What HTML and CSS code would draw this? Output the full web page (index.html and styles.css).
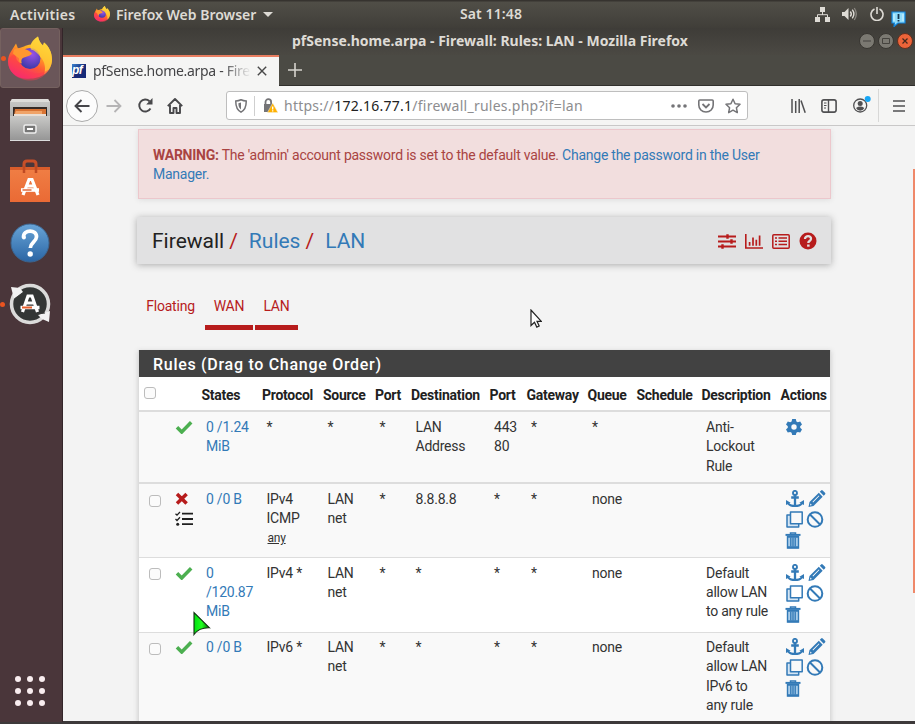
FILE: index.html
```html
<!DOCTYPE html>
<html lang="en">
<head>
<meta charset="utf-8">
<title>pfSense.home.arpa - Firewall: Rules: LAN</title>
<link rel="stylesheet" href="styles.css">
</head>
<body>
<svg class="defs" aria-hidden="true">
  <defs>
    <linearGradient id="flame" x1="0.8" y1="0" x2="0.3" y2="1"><stop offset="0" stop-color="#fff04a"/><stop offset=".35" stop-color="#ffae20"/><stop offset=".65" stop-color="#ff5a35"/><stop offset="1" stop-color="#f0208a"/></linearGradient>
    <radialGradient id="globe" cx=".6" cy=".3" r=".7"><stop offset="0" stop-color="#9a52e8"/><stop offset="1" stop-color="#3c3aa8"/></radialGradient>
    <linearGradient id="blue" x1="0" y1="0" x2="0" y2="1"><stop offset="0" stop-color="#69a5d8"/><stop offset="1" stop-color="#2a65a4"/></linearGradient>
    <linearGradient id="metal" x1="0" y1="0" x2="0" y2="1"><stop offset="0" stop-color="#c9c9c7"/><stop offset="1" stop-color="#949494"/></linearGradient>
    <linearGradient id="bag" x1="0" y1="0" x2="0" y2="1"><stop offset="0" stop-color="#f07f45"/><stop offset="1" stop-color="#ea6a35"/></linearGradient>
    <linearGradient id="green" x1="0" y1="0" x2="1" y2="0"><stop offset="0" stop-color="#00e010"/><stop offset=".5" stop-color="#20ff20"/><stop offset="1" stop-color="#006800"/></linearGradient>
  </defs>
  <symbol id="firefox" viewBox="0 0 44 44">
    <path d="M3 15 8 7l2 5 6-2c2-1 4-2 7-2 1-3 4-6 7-8 1 4 2 6 5 9l1-3c5 4 8 10 8 17 0 10-9 19-21 19C10 44 0 36 0 25c0-4 1-7 3-10Z" fill="url(#flame)"/>
    <circle cx="22" cy="22" r="10.500" fill="url(#globe)"/>
    <path d="M6 13c6-3 15 0 18 4-2 3-6 3-8 4-3 1-3 4-2 6-4-1-6-4-6-7l-3-3Z" fill="#ff9730"/>
    <path d="M30 0c1 4 2 6 5 9l1-3c5 4 8 10 8 17 0 6-3 12-8 15 2-6 1-12-3-17-3-4-6-7-10-8-2-5 2-10 7-13Z" fill="#ffd23a" opacity=".75"/>
    <path d="M0 25c0 11 10 19 23 19 8 0 15-5 18-11-6 4-13 5-20 2-6-2-10-7-10-13l-5-4c-3 1-5 4-6 7Z" fill="#ff3a4c" opacity=".45"/>
  </symbol>
  <symbol id="check" viewBox="0 0 18 14"><path d="M2 7.200 6.700 12 16.200 2.200" fill="none" stroke="#4caf50" stroke-width="3.500"/></symbol>
  <symbol id="times" viewBox="0 0 14 14"><path d="m2 2 9.600 9.600M11.600 2 2 11.600" fill="none" stroke="#b71c1c" stroke-width="3.500"/></symbol>
  <symbol id="tasks" viewBox="0 0 18 16"><path d="M7 2.700h11M7 8h11M7 13.200h11" stroke="#212121" stroke-width="1.800"/><path d="m.5 2.800 1.500 1.400L5 1M.5 8.100 2 9.500l3-3.200" fill="none" stroke="#212121" stroke-width="1.300"/><circle cx="2.700" cy="13.200" r="1.500" fill="#212121"/></symbol>
  <symbol id="gear" viewBox="0 0 16 16"><path fill-rule="evenodd" d="M6.200 0h3.600l.6 2.400 1.400.8 2.400-.7 1.800 3.100-1.800 1.700v1.500L16 10.500l-1.800 3.100-2.400-.7-1.400.8L9.800 16H6.200l-.6-2.300-1.400-.8-2.400.7L0 10.500l1.800-1.700V7.300L0 5.600l1.800-3.100 2.400.7 1.400-.8ZM8 5.300a2.700 2.700 0 1 0 0 5.400 2.700 2.700 0 0 0 0-5.400Z" fill="#337ab7"/></symbol>
  <symbol id="anchor" viewBox="0 0 18 17"><circle cx="9" cy="2.900" r="2" fill="none" stroke="#337ab7" stroke-width="1.900"/><path d="M9 4.500V15M5.200 7.500h7.600" stroke="#337ab7" stroke-width="2.300" fill="none"/><path d="M0 15V10l4.600 2.800-1.300.7c1.400 1 3 1.300 5.700 1.300s4.300-.3 5.700-1.300l-1.300-.7L18 10v5l-1.500-.8C14.900 16.200 12.500 17 9 17s-5.900-.8-7.500-2.800Z" fill="#337ab7"/></symbol>
  <symbol id="pencil" viewBox="0 0 17 17"><path fill-rule="evenodd" d="M0 17 1 12 10.300 2.800l3.900 3.900L5 16Zm1.900-3.400-.4 1.900 1.900-.4ZM4 11.800l.6.600 6.300-6.300-.6-.6ZM11.300 1.800l1.300-1.300q.8-.8 1.600 0l2.300 2.300q.8.800 0 1.600l-1.300 1.300Z" fill="#337ab7"/></symbol>
  <symbol id="clone" viewBox="0 0 17 17"><path d="M1 4.500h3.500v8.200h8V16H1Z" fill="#d5e6f4"/><path d="M4.500 1h11.700v11.700H4.500ZM4.500 4H1v12h11.700v-3.300" fill="none" stroke="#337ab7" stroke-width="1.500" stroke-linejoin="round"/></symbol>
  <symbol id="ban" viewBox="0 0 17 17"><path d="M3 3l11 11" stroke="#337ab7" stroke-width="2"/><circle cx="8.500" cy="8.500" r="7.300" fill="none" stroke="#337ab7" stroke-width="2"/></symbol>
  <symbol id="trash" viewBox="0 0 15 17"><path d="M2 4h11v12H2Z" fill="#a9cdea"/><path d="M5 2V.9h5V2" fill="none" stroke="#337ab7" stroke-width="1.500"/><path d="M0 1.900h15v2H0Z" fill="#337ab7"/><path d="M2 4v12h11V4M5.300 5.500v9M7.500 5.500v9M9.700 5.500v9" fill="none" stroke="#337ab7" stroke-width="1.400"/><path d="M2 15.300h11M2 4.700h11" stroke="#337ab7" stroke-width="2"/></symbol>
</svg>

<header class="topbar">
  <span class="activities">Activities</span>
  <svg class="ff-small"><use href="#firefox"/></svg>
  <span class="appname">Firefox Web Browser</span><i class="caret"></i>
  <span class="clock">Sat 11:48</span>
  <div class="tray">
    <svg class="net" viewBox="0 0 15 15"><path d="M5 0h5v5H5ZM0 10h5v5H0ZM10 10h5v5h-5Z" fill="#dedbd5"/><path d="M7.500 5v3M2.500 10V7.700h10V10" fill="none" stroke="#dedbd5"/></svg>
    <svg class="vol" viewBox="0 0 15 14"><path d="M0 5h2.500L6.500 1v12L2.500 9H0Z" fill="#dedbd5"/><path d="M8.300 4.500q2 2.500 0 5M10.300 2.700q3.200 4.300 0 8.600" fill="none" stroke="#dedbd5" stroke-width="1.400"/><path d="M12.300 1q4 6 0 12" fill="none" stroke="#8a8780" stroke-width="1.300"/></svg>
    <svg class="power" viewBox="0 0 14 14"><path d="M4.500 2A6 6 0 1 0 9.500 2M7 0v7" fill="none" stroke="#dedbd5" stroke-width="1.600"/></svg>
    <svg class="msg" viewBox="0 0 15 16"><path d="M1 1h13v11H7l-4 3.500.4-3.500H1Z" fill="#8fdcfb" stroke="#0e82dc" stroke-width="1.200"/><path d="M3 3v7M12 3v7" stroke="#d8f6ff"/><path d="M7.500 3v5M7.500 9v1.600" stroke="#143652" stroke-width="1.800"/></svg>
  </div>
</header>

<div class="desktop">
  <nav class="dock">
    <div class="launcher active running"><svg width="44" height="45"><use href="#firefox"/></svg></div>
    <div class="launcher"><svg width="42" height="44" viewBox="0 0 42 44"><path d="M3 1h36l2 3v38H1V4Z" fill="url(#metal)"/><path d="M1 4 3 1h36l2 3Z" fill="#deddda"/><path d="M4 9h34v9H4Z" fill="#352b27"/><path d="M6 11h31v7H5Z" fill="#d97434"/><path d="M7 13h26v5H5Z" fill="#f0a368"/><path d="M5 16h32v2H5Z" fill="#e9ded4"/><path d="M1 18h40v25H1Z" fill="url(#metal)"/><path d="M1 42.500h40" stroke="#dcdcdc"/><rect x="15" y="27" width="12" height="8" rx="1.500" fill="#777" stroke="#eee" stroke-width="1.500"/><path d="M18 31h6" stroke="#fff" stroke-width="2"/></svg></div>
    <div class="launcher"><svg width="42" height="44" viewBox="0 0 42 44"><path d="M15 14V5q0-3 3-3h6q3 0 3 3v9" fill="none" stroke="#c84f28" stroke-width="3"/><path d="M1 8h40v35H1Z" fill="url(#bag)"/><path d="M1 8h40v3H1Z" fill="#d75c2b"/><path d="M15 14V7M27 14V7" stroke="#bf4a23" stroke-width="2.500"/><path d="M14 36 20 20.500h3L29 36M17 27h9" fill="none" stroke="#fff" stroke-width="3.200"/><path d="M12 31h18" stroke="#fff" stroke-width="3.600"/><path d="M13.500 31h9" stroke="#e06a3c" stroke-width="1.500"/></svg></div>
    <div class="launcher"><svg width="42" height="42" viewBox="0 0 42 42"><circle cx="21" cy="21" r="19" fill="url(#blue)" stroke="#3c6691"/><path d="M14.500 15.500C14 7 28 7 27.500 15c-.3 5-6 5.500-6.200 11" fill="none" stroke="#fff" stroke-width="3.700"/><circle cx="14.900" cy="15.500" r="2" fill="#fff"/><circle cx="21.200" cy="32" r="2.700" fill="#fff"/></svg></div>
    <div class="launcher running"><svg width="44" height="44" viewBox="0 0 44 44"><circle cx="22" cy="22" r="18.500" fill="#333635" stroke="#dbdbda" stroke-width="3.500"/><path d="m3 5 9 1 3 4-9 7Z" fill="#f2f2f2"/><path d="m30 33 12-4-1 11-7-3Z" fill="#f2f2f2"/><path d="m6.500 17 8.500-6M29 32l8-1" stroke="#3a3b3a" stroke-width="1.200"/><path d="m14.500 30 5.500-16h4l5.500 16M18 21h8" fill="none" stroke="#fff" stroke-width="3.200"/><path d="M12.500 25.500h19" stroke="#fff" stroke-width="3.500"/><path d="M14 25.500h10" stroke="#e65f2c" stroke-width="2"/></svg></div>
    <div class="apps"><i></i><i></i><i></i><i></i><i></i><i></i><i></i><i></i><i></i></div>
  </nav>

  <section class="window">
    <div class="titlebar">
      <span class="wintitle">pfSense.home.arpa - Firewall: Rules: LAN - Mozilla Firefox</span>
      <div class="winbtns">
        <svg viewBox="0 0 16 16"><circle cx="8" cy="8" r="7.500" fill="#7b7972" stroke="#383631"/><path d="M4 8h8" stroke="#45433e"/></svg>
        <svg viewBox="0 0 16 16"><circle cx="8" cy="8" r="7.500" fill="#7b7972" stroke="#383631"/><path d="M4.500 5.500h7v5h-7Z" fill="none" stroke="#45433e"/></svg>
        <svg viewBox="0 0 16 16"><circle cx="8" cy="8" r="7.500" fill="#ed6439" stroke="#64301f"/><path d="m5.500 5.500 5 5m0-5-5 5" stroke="#45281d" stroke-width="1.200"/></svg>
      </div>
    </div>
    <div class="tabs">
      <div class="tab">
        <b class="favicon">pf</b><span class="tabtext">pfSense.home.arpa - Fire</span>
        <svg class="close" viewBox="0 0 10 10"><path d="m.8.8 8.400 8.400m0-8.400L.8 9.200" stroke="#484848" stroke-width="1.400"/></svg>
      </div>
      <svg class="plus" viewBox="0 0 14 14"><path d="M7 0v14M0 7h14" stroke="#d6d3cd" stroke-width="1.600"/></svg>
    </div>
    <div class="toolbar">
      <span class="back"><svg width="16" height="14" viewBox="0 0 16 14"><path d="M15.500 7H1.500M7.500 1l-6 6 6 6" fill="none" stroke="#46464a" stroke-width="1.900"/></svg></span>
      <svg class="forward" viewBox="0 0 16 14"><path d="M.5 7h14M8.500 1l6 6-6 6" fill="none" stroke="#b5b4b5" stroke-width="1.800"/></svg>
      <svg class="reload" viewBox="0 0 15 15"><path d="M12.500 10.500A6 6 0 1 1 11.500 3.200" fill="none" stroke="#48484b" stroke-width="1.900"/><path d="M14.500 0v6.400H8.200Z" fill="#48484b"/></svg>
      <svg class="home" viewBox="0 0 16 16"><path d="M.8 8.200 8 1l7.200 7.200M3 7v8h3.500v-5h3v5H13V7" fill="none" stroke="#48484b" stroke-width="1.900" stroke-linejoin="round"/></svg>
      <div class="urlbar">
        <svg class="shield" viewBox="0 0 12 14"><path d="M6 .8q2.500 1.200 5.200 1.200c.2 5.600-1 9-5.200 11.200C1.800 11 .6 7.600.8 2Q3.500 2 6 .8Z" fill="none" stroke="#747477" stroke-width="1.500"/><path d="M6 3.500v7C4 9 3.400 7 3.400 4.200Z" fill="#747477"/></svg>
        <i class="sep"></i>
        <svg class="lock" viewBox="0 0 15 15"><path d="M2.500 6V4a2.800 2.800 0 0 1 5.600 0v2" fill="none" stroke="#747477" stroke-width="1.800"/><path d="M1 6h8.500v8H1Z" fill="#747477"/><path d="m9.700 5 5.200 9.500H4.500Z" fill="#ffb100" stroke="#f5f0df" stroke-width=".5"/><path d="M9.700 8.500v3m0 .8v1.200" stroke="#fff" stroke-width="1.300"/></svg>
        <span class="url">https://<em>172.16.77.1</em>/firewall_rules.php?if=lan</span>
        <svg class="dots" viewBox="0 0 16 4"><circle cx="2" cy="2" r="1.800"/><circle cx="8" cy="2" r="1.800"/><circle cx="14" cy="2" r="1.800"/></svg>
        <svg class="pocket" viewBox="0 0 16 14"><path d="M1.800 1h12.400q1 0 1 1v4c0 4-3 7-7.200 7S.8 10 .8 6V2q0-1 1-1Z" fill="none" stroke="#747477" stroke-width="1.600"/><path d="m4.500 5 3.500 3.400L11.500 5" fill="none" stroke="#747477" stroke-width="1.800"/></svg>
        <svg class="star" viewBox="0 0 16 16"><path d="m8 1.200 2.100 4.500 4.900.6-3.600 3.400.9 4.900L8 12.200l-4.300 2.400.9-4.900L1 6.300l4.900-.6Z" fill="none" stroke="#747477" stroke-width="1.500" stroke-linejoin="round"/></svg>
      </div>
      <svg class="library" viewBox="0 0 15 14"><path d="M1 0v14M4.700 2v12M8.200 0v14" stroke="#505052" stroke-width="1.500"/><path d="m10 1.500 4.200 12.200" stroke="#505052" stroke-width="1.500"/></svg>
      <svg class="sidebar" viewBox="0 0 16 14"><rect x=".9" y=".9" width="14.200" height="12.200" rx="2" fill="none" stroke="#505052" stroke-width="1.600"/><path d="M7.500 1v12" stroke="#505052" stroke-width="1.400"/><path d="M3 4h2.500M3 6.500h2.500M3 9h2" stroke="#505052"/></svg>
      <svg class="account" viewBox="0 0 18 17"><circle cx="7.200" cy="9.500" r="6.500" fill="none" stroke="#505052" stroke-width="1.300"/><circle cx="7.200" cy="7.500" r="2.500" fill="#505052"/><path d="M3 12q4.200-2.800 8.400 0-1.500 2.800-4.200 2.800T3 12Z" fill="#505052"/><circle cx="14.700" cy="3" r="3" fill="#17a6f5"/></svg>
      <i class="toolsep"></i>
      <svg class="menu" viewBox="0 0 12 12"><path d="M0 1h12M0 6h12M0 11h12" stroke="#505052" stroke-width="1.500"/></svg>
    </div>

    <main class="page">
      <div class="alert"><p><b>WARNING:</b> <span>The 'admin' account password is set to the default value.</span> <a>Change the password in the User<br>Manager.</a></p></div>
      <div class="crumbs">
        <h1><span>Firewall</span><i>/</i><a>Rules</a><i>/</i><a>LAN</a></h1>
        <svg width="18" height="15" viewBox="0 0 18 15"><path d="M0 2.500h18M0 7.500h18M0 12.500h18" stroke="#b71c1c" stroke-width="1.800"/><path d="M9.500.2v4.600M13.500 5.200v4.600M4.500 10.200v4.600" stroke="#b71c1c" stroke-width="2.400"/></svg>
        <svg width="18" height="15" viewBox="0 0 18 15"><path d="M.8 0v14H18" fill="none" stroke="#b71c1c" stroke-width="1.600"/><path d="M4.600 11.800V8M8 11.800V3.500M11.300 11.800V5.700M14.600 11.800V1.500" stroke="#b71c1c" stroke-width="1.700"/></svg>
        <svg width="18" height="15" viewBox="0 0 18 15"><rect x=".8" y=".8" width="16.400" height="13.400" rx="1" fill="none" stroke="#b71c1c" stroke-width="1.500"/><path d="M3 4h2M3 7.300h2M3 10.600h2M6.500 4H15M6.500 7.300H15M6.500 10.600H15" stroke="#b71c1c" stroke-width="1.500"/></svg>
        <svg width="18" height="18" viewBox="0 0 18 18"><circle cx="9" cy="9" r="8.500" fill="#b71c1c"/><path d="M6 7c0-4 6.300-3.700 6 0-.2 2.200-2.700 1.900-2.700 4" fill="none" stroke="#e1dfdf" stroke-width="2.300"/><path d="M8.100 12.500h2.500v2.200H8.100Z" fill="#e1dfdf"/></svg>
      </div>
      <nav class="subnav"><a class="floating">Floating</a><a class="on wan">WAN</a><a class="on lan">LAN</a></nav>
      <section class="panel">
        <h2>Rules (Drag to Change Order)</h2>
        <table>
          <colgroup><col class="c-box"><col class="c-icon"><col class="c-states"><col class="c-proto"><col class="c-source"><col class="c-port"><col class="c-dest"><col class="c-port2"><col class="c-gate"><col class="c-queue"><col class="c-sched"><col class="c-desc"><col class="c-act"></colgroup>
          <thead><tr><th><i class="box"></i></th><th></th><th>States</th><th>Protocol</th><th>Source</th><th>Port</th><th>Destination</th><th>Port</th><th>Gateway</th><th>Queue</th><th>Schedule</th><th>Description</th><th>Actions</th></tr></thead>
          <tbody>
            <tr class="r1"><td></td><td><svg class="check"><use href="#check"/></svg></td><td><a>0 /1.24<br>MiB</a></td><td>*</td><td>*</td><td>*</td><td>LAN<br>Address</td><td>443<br>80</td><td>*</td><td>*</td><td></td><td>Anti-<br>Lockout<br>Rule</td><td><svg class="gear"><use href="#gear"/></svg></td></tr>
            <tr class="r2"><td><i class="box"></i></td><td><svg class="times"><use href="#times"/></svg><svg class="tasks"><use href="#tasks"/></svg></td><td><a>0 /0 B</a></td><td>IPv4<br>ICMP<br><u>any</u></td><td>LAN<br>net</td><td>*</td><td>8.8.8.8</td><td>*</td><td>*</td><td>none</td><td></td><td></td><td><div class="actions"><svg><use href="#anchor"/></svg><svg><use href="#pencil"/></svg><svg><use href="#clone"/></svg><svg><use href="#ban"/></svg><svg><use href="#trash"/></svg></div></td></tr>
            <tr class="r3"><td><i class="box"></i></td><td><svg class="check"><use href="#check"/></svg></td><td><a>0<br>/120.87<br>MiB</a></td><td>IPv4 *</td><td>LAN<br>net</td><td>*</td><td>*</td><td>*</td><td>*</td><td>none</td><td></td><td>Default<br>allow LAN<br>to any rule</td><td><div class="actions"><svg><use href="#anchor"/></svg><svg><use href="#pencil"/></svg><svg><use href="#clone"/></svg><svg><use href="#ban"/></svg><svg><use href="#trash"/></svg></div></td></tr>
            <tr class="r4"><td><i class="box"></i></td><td><svg class="check"><use href="#check"/></svg></td><td><a>0 /0 B</a></td><td>IPv6 *</td><td>LAN<br>net</td><td>*</td><td>*</td><td>*</td><td>*</td><td>none</td><td></td><td>Default<br>allow LAN<br>IPv6 to<br>any rule</td><td><div class="actions"><svg><use href="#anchor"/></svg><svg><use href="#pencil"/></svg><svg><use href="#clone"/></svg><svg><use href="#ban"/></svg><svg><use href="#trash"/></svg></div></td></tr>
          </tbody>
        </table>
      </section>
      <i class="scroll"></i>
    </main>
  </section>
</div>
<svg class="pointer" viewBox="0 0 12 19"><path d="M1 1v15.500l3.500-3.300 2.300 4.900 2.400-1.100L7 12.300h4.300Z" fill="#fff" stroke="#222" stroke-width="1.200"/></svg>
<svg class="green-pointer" viewBox="0 0 18 25"><path d="M1 1.500v22q5-7 15.500-6.700Z" fill="url(#green)" stroke="#102c10" stroke-width="1.100"/></svg>
</body>
</html>
```
FILE: styles.css
```css
* { box-sizing: border-box; }
html, body { width: 915px; height: 724px; margin: 0; overflow: hidden; background: #3d393a; }
body { font-family: Roboto, "Liberation Sans", sans-serif; font-size: 14px; color: #333; }
svg { display: block; flex: none; }
i { font-style: normal; }
.defs { position: absolute; width: 0; height: 0; }

.topbar { height: 28px; display: flex; align-items: center; padding: 0 9px 0 10px; background: linear-gradient(#36332f 0 1px, #504e47 2px, #403e39); color: #dedbd5; font: 600 14px "Noto Sans", sans-serif; white-space: nowrap; }
.activities { width: 84px; letter-spacing: .3px; }
.ff-small { width: 16px; height: 16px; margin-right: 6px; }
.appname { width: 143px; }
.caret { margin-left: 4px; border: 5px solid transparent; border-top-color: #dedbd5; border-bottom: 0; }
.clock { margin-left: 187px; padding-bottom: 1px; letter-spacing: .1px; }
.tray { margin-left: auto; display: flex; align-items: center; }
.net { width: 15px; height: 15px; margin-right: 12px; }
.vol { width: 15px; height: 14px; margin-right: 13px; }
.power { width: 14px; height: 14px; margin-right: 7px; }
.msg { width: 15px; height: 16px; margin: 10px 0 0; }

.desktop { height: 694px; display: flex; }
.dock { width: 63px; background: #4a363a; border-right: 1px solid #332529; display: flex; flex-direction: column; }
.launcher { position: relative; width: 60px; height: 61px; margin-bottom: .5px; display: flex; align-items: center; justify-content: center; }
.active { height: 60px; margin-bottom: 1px; background: #6a5659; border: 1px solid #75615f; border-radius: 3px; }
.running::before { content: ""; position: absolute; left: 0; width: 5px; height: 5px; border-radius: 50%; background: #e95420; }
.apps { margin: auto 0 16px 15px; display: grid; grid-template-columns: repeat(3, 6px); gap: 6px; }
.apps i { width: 6px; height: 6px; border-radius: 50%; background: #f9edef; }

.window { flex: 1; display: flex; flex-direction: column; min-width: 0; }
.titlebar { height: 27px; display: flex; align-items: center; padding: 0 0 2px 229px; background: linear-gradient(#3e3c38, #4b4943); color: #dedbd5; font: bold 14px "Noto Sans", sans-serif; white-space: nowrap; }
.winbtns { display: flex; gap: 3px; margin-left: auto; padding-right: 2px; }
.winbtns svg { width: 16px; height: 16px; }
.tabs { height: 31px; display: flex; align-items: center; background: #4b4a44; border-bottom: 1px solid #302f2c; }
.tab { width: 216px; height: 30px; display: flex; align-items: center; padding-left: 9px; background: #f5f5f4; border-top: 2px solid #e97e61; box-shadow: 0 1px #f5f5f4; }
.favicon { width: 14px; height: 14px; background: linear-gradient(135deg, #3c84d0, #172a78 50%); color: #fff; font: italic bold 12px/12px "Liberation Sans", sans-serif; letter-spacing: -.5px; }
.tabtext { width: 158px; margin-left: 7px; padding-bottom: 1px; font: 14px "Noto Sans", sans-serif; letter-spacing: -.3px; color: #454547; white-space: nowrap; mask-image: linear-gradient(90deg, #000 82%, transparent); }
.close { width: 10px; height: 10px; margin-left: 6px; }
.plus { width: 14px; height: 14px; margin-left: 9px; }
.toolbar { height: 40px; padding-left: 3px; display: flex; align-items: center; background: #f5f5f4; border-bottom: 1px solid #c9c8c8; }
.back { width: 32px; height: 32px; border: 1px solid #aaa; border-radius: 50%; background: #fcfcfc; display: grid; place-items: center; }
.forward { width: 16px; height: 14px; margin-left: 8px; }
.reload { width: 15px; height: 15px; margin-left: 16px; }
.home { width: 16px; height: 16px; margin-left: 14px; }
.urlbar { width: 522px; height: 29px; margin-left: 43px; border: 1px solid #bebebe; border-radius: 3px; background: #fff; display: flex; align-items: center; padding: 0 6px 0 8px; }
.shield { width: 12px; height: 14px; }
.sep { width: 1px; height: 20px; background: #cfcfcf; margin: 0 8px 0 7px; }
.lock { width: 15px; height: 15px; margin-right: 6px; }
.url { width: 387px; font: 14px "Noto Sans", sans-serif; letter-spacing: .25px; color: #8d8d8f; white-space: nowrap; }
.url em { font-style: normal; color: #222; }
.dots { width: 16px; height: 4px; fill: #747477; }
.pocket { width: 16px; height: 14px; margin-left: 11px; }
.star { width: 16px; height: 16px; margin-left: 11px; }
.library { width: 15px; height: 14px; margin-left: 43px; }
.sidebar { width: 16px; height: 14px; margin-left: 15px; }
.account { width: 18px; height: 17px; margin: -3px 0 0 16px; }
.toolsep { width: 1px; height: 33px; background: #d8d8d7; margin-left: 7px; }
.menu { width: 12px; height: 12px; margin-left: 14px; }

.page { position: relative; height: 595px; padding: 3px 0 0 75px; background: #f3f3f3; overflow: hidden; }
a { color: #337ab7; }
.alert { width: 693px; height: 70px; padding: 16px 14px; border: 1px solid #ecc7cc; background: #f2dede; color: #a94442; line-height: 19.3px; letter-spacing: -.24px; box-shadow: 0 1px 5px #ddd; white-space: nowrap; }
.alert p { margin: 0; }
.crumbs { width: 694px; height: 47px; margin: 18px 0 0 -1px; padding: 0 14px 0 15px; display: flex; align-items: center; background: #e1e1e2; box-shadow: 0 1px 7px #aaa; }
.crumbs h1 { display: flex; margin: 0 auto 0 0; font-weight: 400; font-size: 21px; line-height: 30px; color: #212121; }
.crumbs h1 i { color: #b71c1c; margin: 0 11px 0 5px; }
.crumbs svg { margin: 1px 0 0 9px; }
.subnav { height: 41px; display: flex; margin: 25px 0 0; letter-spacing: -.22px; }
.subnav a { height: 41px; padding-top: 8px; line-height: 19px; color: #b71c1c; text-align: center; }
.floating { width: 65px; }
.wan { width: 48px; margin-left: 2px; }
.lan { width: 43px; margin-left: 2px; }
.on { border-bottom: 5px solid #b71c1c; }
.panel { width: 693px; margin-top: 20px; border: 1px solid #dcdcdc; border-top: 0; box-shadow: 0 1px 5px #ccc; background: #fff; }
.panel h2 { height: 27px; margin: 0; padding-left: 14px; background: #424242; color: #fff; font-size: 16px; line-height: 29px; font-weight: 500; letter-spacing: .71px; }
table { width: 691px; table-layout: fixed; border-collapse: collapse; line-height: 19.3px; letter-spacing: -.24px; }
.c-box { width: 31px; } .c-icon { width: 31px; } .c-states { width: 60.500px; } .c-proto { width: 61px; }
.c-source { width: 52px; } .c-port { width: 36px; } .c-dest { width: 78.500px; } .c-port2 { width: 37px; }
.c-gate { width: 61px; } .c-queue { width: 49px; } .c-sched { width: 65px; } .c-desc { width: 79px; } .c-act { width: 50px; }
th { height: 34px; padding: 5px 0 0 .5px; text-align: left; font-size: 14px; font-weight: 700; color: #212121; border-bottom: 2px solid #ddd; white-space: nowrap; letter-spacing: -.27px; }
td { padding: 5.500px 0 0 5px; vertical-align: top; white-space: nowrap; border-top: 1px solid #ddd; }
tr.r1 td { height: 72px; border-top: 0; padding-top: 6px; }
tr.r2 td { height: 74px; border-top: 2px solid #ddd; }
tr.r3 td { height: 75px; padding-top: 6px; } tr.r4 td { height: 96px; }
.r1, .r2, .r4 { background: #f9f9f9; }
.box { display: block; width: 12px; height: 12px; border: 1px solid #bcbcbc; border-radius: 3px; background: #fbfbfb; }
th .box { margin: -6px 0 0 4.500px; }
td .box { margin: 5px 0 0; margin-left: 5px; }
.r3 .box { margin-top: 4px; }
u { font-size: 12px; margin-left: 1px; }
.check { width: 18px; height: 14px; margin: 2px 0 0; }
.times { width: 14px; height: 14px; margin: 2px 0 0; }
.tasks { width: 18px; height: 16px; margin: 5px 0 0; }
.gear { width: 16px; height: 16px; margin: 1px 0 0 1px; }
.actions { width: 45px; display: grid; grid-template-columns: 18px 17px; column-gap: 4px; row-gap: 4px; padding: 0 0 0 1px; }
.actions svg { width: 18px; height: 17px; }
.actions svg:nth-child(3) { width: 17px; }
.actions svg:nth-child(4) { margin-left: -2px; }
.actions svg:nth-child(5) { margin-left: -2px; }
.scroll { position: absolute; right: 0; top: 43px; width: 2px; height: 424px; background: #ef8869; }
.pointer { position: absolute; left: 530px; top: 309px; width: 12px; height: 19px; }
.green-pointer { position: absolute; left: 193px; top: 611px; width: 18px; height: 25px; }
```
